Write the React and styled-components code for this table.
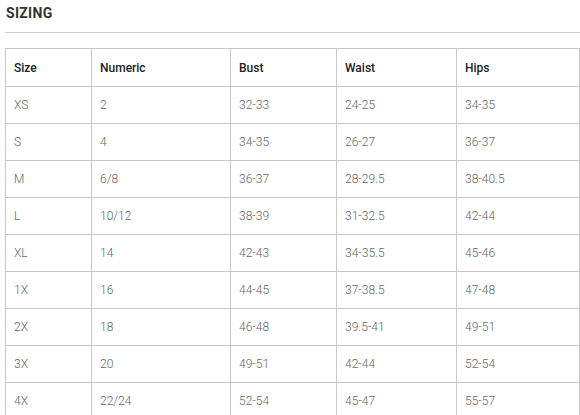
import React from 'react';
import styled, { createGlobalStyle } from 'styled-components';

const GlobalStyle = createGlobalStyle`
  body {
    margin: 0;
    background: #fff;
    font-family: Roboto, 'Liberation Sans', sans-serif;
  }
  *, *::before, *::after {
    box-sizing: border-box;
  }
`;

const Wrapper = styled.div`
  padding: 5px 0 0 5px;
  width: 580px;
`;

const Title = styled.h2`
  margin: 0 0 0 1px;
  font-size: 14px;
  font-weight: 700;
  letter-spacing: 0.3px;
  color: #333;
  line-height: 16px;
`;

const Rule = styled.hr`
  border: none;
  border-top: 1px solid #ccc;
  margin: 11px 0 15px;
  width: 575px;
`;

const Table = styled.table`
  border-collapse: collapse;
  width: 574px;
  table-layout: fixed;
`;

const HeadCell = styled.th`
  border: 1px solid #c8c8c8;
  height: 38px;
  padding: 0 0 0 8px;
  text-align: left;
  font-size: 12px;
  font-weight: 500;
  color: #222;
  width: ${(p) => p.w}px;
`;

const Cell = styled.td`
  border: 1px solid #c8c8c8;
  height: 37px;
  padding: 0 0 0 8px;
  font-size: 12px;
  font-weight: 300;
  color: #666;
`;

const columns = [
  { label: 'Size', width: 86 },
  { label: 'Numeric', width: 139 },
  { label: 'Bust', width: 106 },
  { label: 'Waist', width: 120 },
  { label: 'Hips', width: 123 }
];

const rows = [
  ['XS', '2', '32-33', '24-25', '34-35'],
  ['S', '4', '34-35', '26-27', '36-37'],
  ['M', '6/8', '36-37', '28-29.5', '38-40.5'],
  ['L', '10/12', '38-39', '31-32.5', '42-44'],
  ['XL', '14', '42-43', '34-35.5', '45-46'],
  ['1X', '16', '44-45', '37-38.5', '47-48'],
  ['2X', '18', '46-48', '39.5-41', '49-51'],
  ['3X', '20', '49-51', '42-44', '52-54'],
  ['4X', '22/24', '52-54', '45-47', '55-57']
];

const App = () => {
  return (
    <>
      <GlobalStyle />
      <Wrapper>
        <Title>SIZING</Title>
        <Rule />
        <Table>
          <thead>
            <tr>
              {columns.map((c) => (
                <HeadCell key={c.label} w={c.width}>
                  {c.label}
                </HeadCell>
              ))}
            </tr>
          </thead>
          <tbody>
            {rows.map((r) => (
              <tr key={r[0]}>
                {r.map((v, i) => (
                  <Cell key={i}>{v}</Cell>
                ))}
              </tr>
            ))}
          </tbody>
        </Table>
      </Wrapper>
    </>
  );
};

export default App;
